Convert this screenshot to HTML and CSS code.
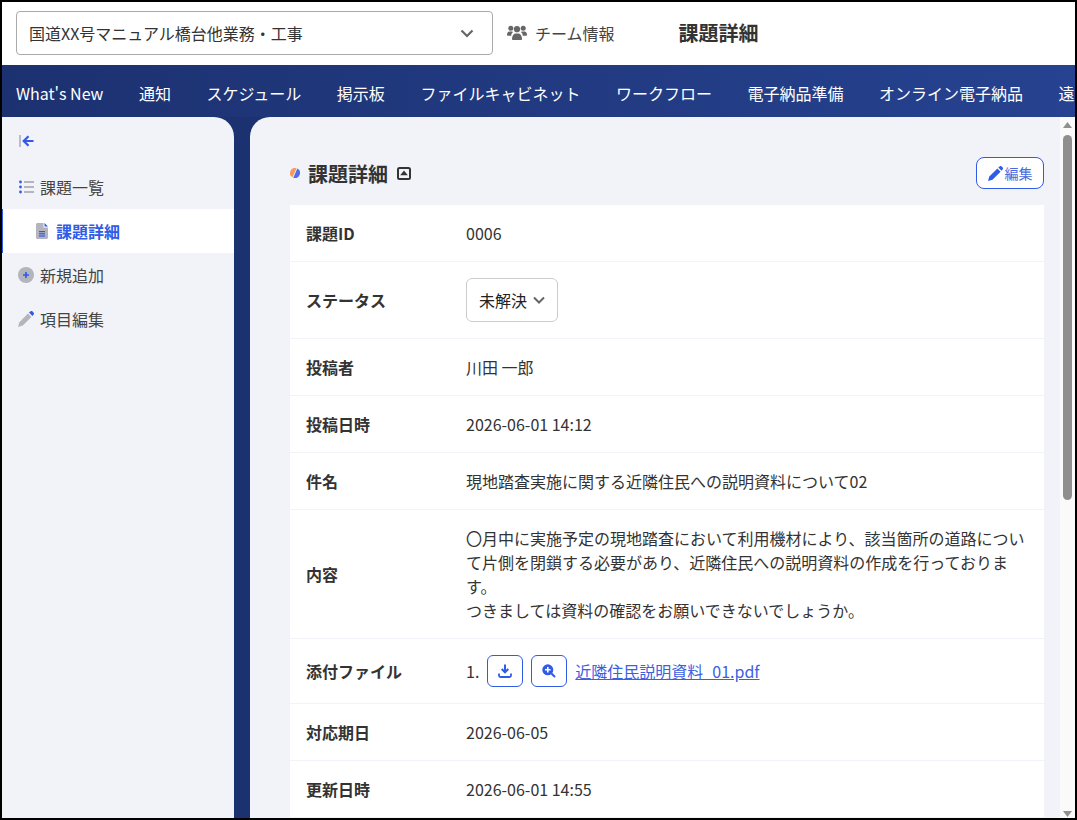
FILE: index.html
```html
<!DOCTYPE html>
<html lang="ja">
<head>
  <meta charset="UTF-8">
  <meta name="viewport" content="width=device-width, initial-scale=1.0">
  <title>課題詳細</title>
  <link rel="stylesheet" href="styles.css">
</head>
<body>
  <div class="app">
    <div class="topbar">
      <div class="project-select">
        <span>国道XX号マニュアル橋台他業務・工事</span>
        <svg class="chevron" width="14" height="9" viewBox="0 0 14 9"><path d="M1.500 1.500 7 7l5.500-5.500" fill="none" stroke="#666" stroke-width="2.200"/></svg>
      </div>
      <div class="team-info">
        <svg width="20" height="16" viewBox="0 0 20 16" fill="#666"><circle cx="3.800" cy="3.200" r="2.500"/><circle cx="16.200" cy="3.200" r="2.500"/><circle cx="10" cy="4.200" r="3.100"/><path d="M0 10c0-2 1-3.500 2.500-3.500h2.300c.5 0 1 .2 1.300.5-1.200.9-1.800 2.200-1.900 3.700H.8C.3 10.700 0 10.400 0 10zM20 10c0-2-1-3.500-2.500-3.500h-2.300c-.5 0-1 .2-1.300.5 1.200.9 1.800 2.200 1.900 3.700h3.400c.5 0 .8-.3.800-.7zM5 14c0-3.500 1.800-5.500 4-5.500h2c2.200 0 4 2 4 5.500 0 .6-.4 1-1 1H6c-.6 0-1-.4-1-1z"/></svg>
        <span>チーム情報</span>
      </div>
      <div class="page-title">課題詳細</div>
    </div>

    <div class="navbar">
      <div class="nav-item">What's New</div>
      <div class="nav-item">通知</div>
      <div class="nav-item">スケジュール</div>
      <div class="nav-item">掲示板</div>
      <div class="nav-item">ファイルキャビネット</div>
      <div class="nav-item">ワークフロー</div>
      <div class="nav-item">電子納品準備</div>
      <div class="nav-item">オンライン電子納品</div>
      <div class="nav-item">遠隔臨場</div>
    </div>

    <div class="body-area">
      <div class="sidebar">
        <div class="side-toggle">
          <svg width="15" height="12" viewBox="0 0 15 12"><rect x="0" y="0" width="2" height="12" fill="#bcbcc4"/><path d="M14.500 6H5.500M9.500 1.200 4.700 6l4.800 4.800" fill="none" stroke="#2f5be7" stroke-width="2.200"/></svg>
        </div>
        <div class="side-item">
          <svg width="16" height="14" viewBox="0 0 16 14"><g fill="#2f5be7"><circle cx="2.500" cy="2" r="1.400"/><circle cx="2.500" cy="7" r="1.400"/><circle cx="2.500" cy="12" r="1.400"/></g><g fill="#b4b4bc"><rect x="6" y="1" width="10" height="2"/><rect x="6" y="6" width="10" height="2"/><rect x="6" y="11" width="10" height="2"/></g></svg>
          <span>課題一覧</span>
        </div>
        <div class="side-item side-child active">
          <svg width="12" height="16" viewBox="0 0 12 16"><path d="M1.500 0H7.500V4.500H12V14.500C12 15.300 11.300 16 10.500 16H1.500C.7 16 0 15.300 0 14.500V1.500C0 .7.7 0 1.500 0z" fill="#b4b4bc"/><path d="M8.500 0 12 3.500H8.500z" fill="#2f5be7"/><g fill="#2f5be7"><rect x="3" y="8" width="6" height="1.200"/><rect x="3" y="10.200" width="6" height="1.200"/><rect x="3" y="12.400" width="6" height="1.200"/></g></svg>
          <span>課題詳細</span>
        </div>
        <div class="side-item">
          <svg width="16" height="16" viewBox="0 0 16 16"><circle cx="8" cy="8" r="8" fill="#b4b4bc"/><path d="M8 5v6M5 8h6" stroke="#2f5be7" stroke-width="1.700"/></svg>
          <span>新規追加</span>
        </div>
        <div class="side-item">
          <svg width="16" height="16" viewBox="0 0 16 16"><path d="M10 2.600 13.400 6 4.800 14.600 0 16 1.400 11.200z" fill="#b4b4bc"/><path d="M11 1.600 12.300.5c.7-.7 1.700-.7 2.300 0l.9.900c.7.7.7 1.700 0 2.300L14.400 5z" fill="#2f5be7"/></svg>
          <span>項目編集</span>
        </div>
      </div>

      <div class="main-wrap">
        <div class="main">
          <div class="section-head">
            <svg class="title-dot" width="10" height="10" viewBox="0 0 10 10"><path d="M6.500.23A5 5 0 0 0 2.500 9.330z" fill="#f79a5f"/><path d="M7.300.56A5 5 0 0 1 3.300 9.700z" fill="#4f6fe8"/></svg>
            <h2 class="section-title">課題詳細</h2>
            <svg class="collapse" width="14" height="13" viewBox="0 0 14 13"><rect x="1" y="1" width="12" height="11" rx="1.500" fill="none" stroke="#333" stroke-width="2"/><path d="M7 3.500 10.800 8.300H3.200z" fill="#333"/></svg>
            <button class="edit-btn">
              <svg width="15" height="15" viewBox="0 0 16 16" fill="#2f5be7"><path d="M10 2.600 13.400 6 4.800 14.600 0 16 1.400 11.200z"/><path d="M11 1.600 12.300.5c.7-.7 1.700-.7 2.300 0l.9.900c.7.7.7 1.700 0 2.300L14.400 5z"/></svg>
              編集
            </button>
          </div>

          <div class="detail">
            <div class="row"><div class="label">課題ID</div><div class="value">0006</div></div>
            <div class="row">
              <div class="label">ステータス</div>
              <div class="value">
                <div class="status-select">未解決
                  <svg width="12" height="8" viewBox="0 0 12 8"><path d="M1 1.500 6 6.500l5-5" fill="none" stroke="#666" stroke-width="2"/></svg>
                </div>
              </div>
            </div>
            <div class="row"><div class="label">投稿者</div><div class="value">川田 一郎</div></div>
            <div class="row"><div class="label">投稿日時</div><div class="value">2026-06-01 14:12</div></div>
            <div class="row"><div class="label">件名</div><div class="value">現地踏査実施に関する近隣住民への説明資料について02</div></div>
            <div class="row">
              <div class="label">内容</div>
              <div class="value">〇月中に実施予定の現地踏査において利用機材により、該当箇所の道路について片側を閉鎖する必要があり、近隣住民への説明資料の作成を行っております。<br>つきましては資料の確認をお願いできないでしょうか。</div>
            </div>
            <div class="row">
              <div class="label">添付ファイル</div>
              <div class="value attach">
                <span>1.</span>
                <button class="icon-btn">
                  <svg width="14" height="14" viewBox="0 0 14 14"><path d="M7 .5v7.500M3.700 5 7 8.300 10.300 5" fill="none" stroke="#2f5be7" stroke-width="2"/><path d="M1 9.500v2c0 1 .7 1.500 1.500 1.500h9c.8 0 1.500-.5 1.500-1.500v-2" fill="none" stroke="#2f5be7" stroke-width="1.800"/></svg>
                </button>
                <button class="icon-btn">
                  <svg width="14" height="14" viewBox="0 0 14 14"><circle cx="5.800" cy="5.800" r="5.500" fill="#2f5be7"/><path d="M5.800 3v5.600M3 5.800h5.600" stroke="#fff" stroke-width="1.600"/><path d="M9.500 9.500 13 13" stroke="#2f5be7" stroke-width="2"/></svg>
                </button>
                <a class="file-link" href="#">近隣住民説明資料_01.pdf</a>
              </div>
            </div>
            <div class="row"><div class="label">対応期日</div><div class="value">2026-06-05</div></div>
            <div class="row"><div class="label">更新日時</div><div class="value">2026-06-01 14:55</div></div>
          </div>
        </div>

        <div class="scrollbar">
          <svg width="9" height="6" viewBox="0 0 9 6"><path d="M4.500 0 9 6H0z" fill="#909090"/></svg>
          <div class="scroll-track"><div class="scroll-thumb"></div></div>
          <svg width="9" height="6" viewBox="0 0 9 6"><path d="M4.500 6 9 0H0z" fill="#909090"/></svg>
        </div>
      </div>
    </div>
  </div>
</body>
</html>
```

FILE: styles.css
```css
* {
  margin: 0;
  padding: 0;
  box-sizing: border-box;
  font-family: "Noto Sans CJK JP", "Noto Sans", sans-serif;
}

html, body {
  height: 100%;
  overflow: hidden;
}

body {
  color: #333;
  font-size: 16px;
  line-height: 24px;
}

.app {
  height: 100vh;
  border: 2px solid #000;
  display: flex;
  flex-direction: column;
  background: #fff;
}

.topbar {
  flex: 0 0 63px;
  display: flex;
  align-items: center;
  padding: 0 0 1px 14px;
}

.project-select {
  width: 477px;
  height: 44px;
  border: 1px solid #aaa;
  border-radius: 4px;
  padding: 0 18px 0 12px;
  display: flex;
  align-items: center;
  justify-content: space-between;
}

.team-info {
  display: flex;
  align-items: center;
  gap: 8px;
  margin-left: 14px;
  color: #444;
}

.page-title {
  margin-left: 64px;
  font-size: 20px;
  font-weight: 700;
}

.navbar {
  flex: 0 0 52px;
  display: flex;
  align-items: center;
  gap: 35.500px;
  padding: 3px 0 0 14px;
  overflow: hidden;
  background: linear-gradient(to right, #1c3170, #264290);
}

.nav-item {
  color: #fff;
  white-space: nowrap;
}

.body-area {
  flex: 1;
  min-height: 0;
  display: flex;
  gap: 16px;
  background: #1c3170;
}

.sidebar {
  flex: 0 0 232px;
  background: #f1f3f8;
  border-top-right-radius: 20px;
}

.side-toggle {
  height: 48px;
  padding: 18px 0 0 17px;
  display: flex;
  align-items: flex-start;
}

.side-item {
  height: 44px;
  display: flex;
  align-items: center;
  gap: 6px;
  padding-left: 16px;
  color: #444;
}

.side-child {
  padding-left: 33px;
  gap: 8px;
}

.side-item.active {
  background: #fff;
  border-left: 1px solid #2f5be7;
  color: #2f5be7;
  font-weight: 700;
}

.main-wrap {
  flex: 1;
  min-width: 0;
  display: flex;
  background: #f1f3f8;
  border-top-left-radius: 20px;
}

.main {
  flex: 1;
  min-width: 0;
  padding: 40px 16px 0 40px;
  overflow: hidden;
}

/* scrollbar is drawn, the browser hides the real one */
.scrollbar {
  flex: 0 0 15px;
  display: flex;
  flex-direction: column;
  align-items: center;
  padding: 5px 0 1px;
  background: #fafafa;
}

.scroll-track {
  flex: 1;
  width: 100%;
  padding: 7px 3px 0;
}

.scroll-thumb {
  height: 365px;
  background: #8f8f8f;
  border-radius: 5px;
}

.section-head {
  height: 32px;
  margin-bottom: 16px;
  display: flex;
  align-items: center;
}

.title-dot {
  margin-right: 8px;
}

.section-title {
  padding-top: 2px;
  font-size: 20px;
  font-weight: 700;
}

.collapse {
  margin-left: 9px;
}

.edit-btn {
  margin-left: auto;
  height: 32px;
  width: 68px;
  display: flex;
  align-items: center;
  justify-content: center;
  gap: 2px;
  background: #fff;
  border: 1px solid #2f5be7;
  border-radius: 8px;
  color: #4a6cdc;
  font-size: 14px;
}

.detail {
  background: #fff;
}

.row {
  display: grid;
  grid-template-columns: 160px 1fr;
  align-items: center;
  padding: 16px;
  border-bottom: 1px solid #f1f3f8;
}

.label {
  font-weight: 700;
}

.status-select {
  width: 92px;
  height: 44px;
  border: 1px solid #ccc;
  border-radius: 6px;
  padding-left: 12px;
  display: flex;
  align-items: center;
  gap: 6px;
  color: #222;
}

.attach {
  display: flex;
  align-items: center;
  gap: 8px;
}

.icon-btn {
  width: 36px;
  height: 32px;
  display: flex;
  align-items: center;
  justify-content: center;
  background: #fff;
  border: 1px solid #2f5be7;
  border-radius: 6px;
}

.file-link {
  color: #3d5fe0;
}
```
